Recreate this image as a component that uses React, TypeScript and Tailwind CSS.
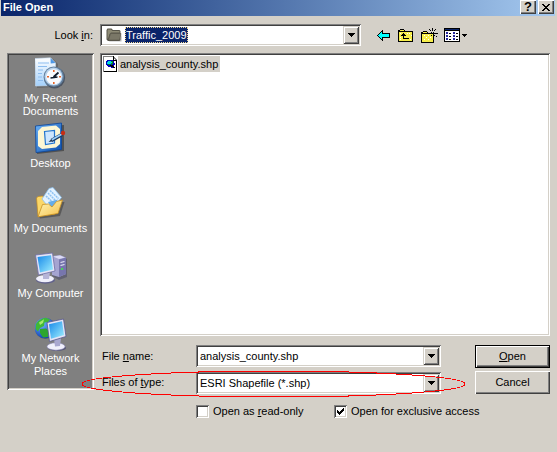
import React, { useState } from "react";
import clsx from "clsx";

const sunken =
  "shadow-[inset_1px_1px_0_#808080,inset_-1px_-1px_0_#fff,inset_2px_2px_0_#404040,inset_-2px_-2px_0_#d4d0c8]";
const raised =
  "bg-[#d4d0c8] shadow-[inset_1px_1px_0_#fff,inset_-1px_-1px_0_#404040,inset_-2px_-2px_0_#808080]";

function RecentIcon() {
  return (
    <svg viewBox="0 0 32 32" className="h-8 w-8" aria-hidden="true">
      <defs>
        <linearGradient id="page" x1="0" y1="0" x2="0" y2="1">
          <stop offset="0" stopColor="#fff" />
          <stop offset="1" stopColor="#a3d0fb" />
        </linearGradient>
      </defs>
      <path d="M1 2 L17 1 L22 6 V29 L1 30 Z" fill="#444" opacity=".4" transform="translate(1 1)" />
      <path d="M0 1.500 L15.500 0.800 L20.500 6 V28.500 L0.500 29 Z" fill="url(#page)" stroke="#c4dcf4" strokeWidth=".6" />
      <path d="M15.500 1 L15.700 6.500 L20.500 6 Z" fill="#4f98e6" />
      <path d="M3 6h11M3 9.500h9M3 13h5M3 16.500h4M3 20h4M3 23.500h5" stroke="#8dbdef" strokeWidth="1.2" />
      <circle cx="19.500" cy="20.800" r="10.600" fill="#3f4a5c" opacity=".8" />
      <circle cx="18.800" cy="19.800" r="10.200" fill="#64819f" />
      <circle cx="18.600" cy="19.600" r="9" fill="#b9d3ec" />
      <circle cx="18.800" cy="19.800" r="7.600" fill="#f9fbff" />
      <path d="M18.800 13v2M18.800 25v2M12 19.800h2M24 19.800h2" stroke="#e5642b" strokeWidth="1.600" />
      <path d="M23.500 15.500 L18.500 20 M15.500 21 L22.500 20" stroke="#101c2c" strokeWidth="1.700" fill="none" />
    </svg>
  );
}

function DesktopIcon() {
  return (
    <svg viewBox="0 0 32 32" className="h-8 w-8" aria-hidden="true">
      <defs>
        <linearGradient id="desk" x1="0" y1="0" x2="1" y2="1">
          <stop offset="0" stopColor="#6bb2f7" />
          <stop offset="1" stopColor="#0c4fae" />
        </linearGradient>
      </defs>
      <path d="M2 5 L29 3 V29 L2 32 Z" fill="#333" opacity=".6" />
      <path d="M0.500 4 L26.500 1 V27.500 L1 30.500 Z" fill="url(#desk)" stroke="#0b4599" strokeWidth=".8" />
      <path d="M7 5 L21 3.500 L25 7 V22 L21 25.500 L7 27 L3 24 V9 Z" fill="#fdf7d4" />
      <path d="M9.500 9.500 L19.500 8.500 V21 L10.500 22.500 Z" fill="#cde6fe" stroke="#2375cf" strokeWidth="1.2" />
      <path d="M16.500 18.500 L27 12.500" stroke="#1c3a63" strokeWidth="3.600" />
      <path d="M16.500 18 L27 12" stroke="#9bd0fa" strokeWidth="1.800" />
      <path d="M13.500 20 L16.500 17 L17.500 19.500 Z" fill="#263b56" />
      <circle cx="28" cy="11" r="2.200" fill="#c62d14" />
    </svg>
  );
}

function DocumentsIcon() {
  return (
    <svg viewBox="0 0 32 32" className="h-8 w-8" aria-hidden="true">
      <defs>
        <linearGradient id="fold" x1="0" y1="0" x2="1" y2="1">
          <stop offset="0" stopColor="#fff6b8" />
          <stop offset="1" stopColor="#f6c04a" />
        </linearGradient>
      </defs>
      <path d="M4 29 L5 31.500 L25 29 L29.500 15 L24 15 Z" fill="#333" opacity=".5" />
      <path d="M1.500 11 L3 9.500 L7.500 9 L9.500 11 L24 10 L20 27 L3 29.500 Z" fill="#fbd768" stroke="#c18a20" strokeWidth=".7" />
      <path d="M7 12 L14 1.500 L18 0.500 L26.500 10.500 L16 23 Z" fill="#e3f2ff" stroke="#8cc0ee" strokeWidth=".8" />
      <path d="M15 3.500 L23.500 11.500 M13 6 L21 14 M11 9 L18 15.500" stroke="#8dc2f3" strokeWidth="1.500" strokeDasharray="2 .7" />
      <path d="M13 15 L23 12.500 L16.500 21 Z" fill="#66ade9" />
      <path d="M3 29.800 L7.500 17.500 L13.500 17 L17 20 L21.500 14.500 L27.500 13 L23 26.500 Z" fill="url(#fold)" stroke="#c68f22" strokeWidth=".8" />
    </svg>
  );
}

function ComputerIcon() {
  return (
    <svg viewBox="0 0 32 32" className="h-8 w-8" aria-hidden="true">
      <defs>
        <linearGradient id="screen" x1="0" y1="0" x2="1" y2="1">
          <stop offset="0" stopColor="#1688e9" />
          <stop offset="1" stopColor="#a0f0ff" />
        </linearGradient>
      </defs>
      <path d="M17 6 L27 4 L32 7 V25 L24 28 L17 24 Z" fill="#4c4c67" opacity=".6" />
      <path d="M17 4 L25 3 L31 5.500 V22 L24 25 L17 23 Z" fill="#a5a4d1" />
      <path d="M24 7.500 L31 5.500 V22 L24 25 Z" fill="#7776ad" />
      <path d="M18 4.500 L25 3.500 L30 5.500 L24 7 Z" fill="#dcdcf4" />
      <path d="M25.500 10.500 L29.500 9.500 M25.500 13.500 L29.500 12.500" stroke="#e8e8fa" strokeWidth="1.200" />
      <rect x="26" y="16" width="2" height="2" fill="#4ad35a" />
      <ellipse cx="10.500" cy="28" rx="9.500" ry="3.700" fill="#62628c" />
      <ellipse cx="10" cy="26.800" rx="9" ry="3.500" fill="#f0f0fb" />
      <path d="M8 20 L15 20 L14 27 L8 27 Z" fill="#b6b5d8" />
      <path d="M0.500 3 L17.500 1 L20 19 L3.500 23 Z" fill="#e4e4f6" stroke="#6e6da4" strokeWidth=".8" />
      <path d="M2.500 5 L16 3.200 L18 17.500 L5 20.500 Z" fill="url(#screen)" />
    </svg>
  );
}

function NetworkIcon() {
  return (
    <svg viewBox="0 0 32 34" className="h-[34px] w-8" aria-hidden="true">
      <defs>
        <radialGradient id="globe" cx=".35" cy=".3" r=".75">
          <stop offset="0" stopColor="#6fb4ff" />
          <stop offset="1" stopColor="#0a3cb4" />
        </radialGradient>
      </defs>
      <circle cx="10.500" cy="11.500" r="10.500" fill="#333" opacity=".4" />
      <circle cx="10" cy="11" r="10.300" fill="url(#globe)" />
      <path d="M1 7 Q5 1 11 0.800 L15 2.500 L13 5 L9.500 5.500 L9 9 L5 11 L3 14.500 L0.500 12 Z" fill="#3fb837" />
      <path d="M5 12 L11 11.500 L14 14 L13 20 L8 20.500 L5 16 Z" fill="#2ca52e" />
      <path d="M4 5.500 L9 2.200 L8 6 L5 8 Z" fill="#a6ea6c" />
      <ellipse cx="22" cy="31" rx="9" ry="3" fill="#4a4a70" opacity=".8" />
      <ellipse cx="21" cy="29.500" rx="9" ry="3.700" fill="#f0f0fb" stroke="#8b8ab5" strokeWidth=".6" />
      <path d="M19 22 L26 21 L25 29 L20 29.500 Z" fill="#a9a8d0" />
      <path d="M12 5.500 L28.500 2 L31 19.500 L14.500 24.500 Z" fill="#e4e4f6" stroke="#58588b" strokeWidth=".8" />
      <path d="M14 7.200 L27 4.300 L29 18 L16 21.800 Z" fill="url(#screen)" />
    </svg>
  );
}

const places = [
  { label: "My Recent Documents", icon: RecentIcon },
  { label: "Desktop", icon: DesktopIcon },
  { label: "My Documents", icon: DocumentsIcon },
  { label: "My Computer", icon: ComputerIcon },
  { label: "My Network Places", icon: NetworkIcon },
];

function FolderIcon() {
  return (
    <svg viewBox="0 0 16 14" className="h-3.5 w-4 shrink-0" aria-hidden="true">
      <path d="M2.500 12.500 H14 L16 6 L15.500 13.500 H3.500 Z" fill="#999" opacity=".6" />
      <path d="M0.500 2 L1.500 0.500 H5.500 L7 2 H13.500 L14.500 3 V12 L13.500 13 H2 L0.500 11.500 Z" fill="#57554a" />
      <path d="M1.500 2.500 L2 1.500 H5 L6.500 3 H13.500 V4.500 H5 L3.500 6 L2 11 L1.500 10.500 Z" fill="#8d8a75" />
      <path d="M4.500 5.500 H15 L13.500 12 H2.500 Z" fill="#7a7767" stroke="#5a584c" strokeWidth=".6" />
    </svg>
  );
}

function ShapefileIcon() {
  return (
    <svg viewBox="0 0 14 16" className="h-4 w-3.5 shrink-0" shapeRendering="crispEdges" aria-hidden="true">
      <path d="M0.500 0.500 H10 L13.500 4 V15.500 H0.500 Z" fill="#fff" stroke="#808080" />
      <path d="M10 0v4h4M13.500 4v12M1 15.500h13" fill="none" stroke="#000" />
      <path d="M4 4h6v1h1v2h1v2h-1v2h-1v1h-2v-1h-3v-1h-1v-1h-1v-4h1z" fill="#0000c0" />
      <path d="M5 5h3v1h1v1h-1v1h-1v1h-2v-1h-1v-2h1z" fill="#00d8d8" />
      <path d="M8 5h2v3h-1v1h-1v-2h1v-1h-1zM5 8h2v1h-2z" fill="#008a20" />
      <path d="M7 9h3v1h1v1h1v1h-2v-1h-2v-1h-1z" fill="#000" />
    </svg>
  );
}

function Caret() {
  return (
    <svg viewBox="0 0 7 4" className="h-1 w-[7px]" shapeRendering="crispEdges" aria-hidden="true">
      <path d="M0 0h7v1h-1v1h-1v1h-1v1h-1v-1h-1v-1h-1v-1h-1z" />
    </svg>
  );
}

const arrowBox =
  "flex w-4 shrink-0 items-center justify-center bg-[#d4d0c8] shadow-[inset_1px_1px_0_#d4d0c8,inset_-1px_-1px_0_#404040,inset_2px_2px_0_#fff,inset_-2px_-2px_0_#808080]";

function ToolButton({ label, className, children }: { label: string; className?: string; children: React.ReactNode }) {
  return (
    <button type="button" aria-label={label} className={clsx("flex h-[22px] items-center justify-center", className)}>
      {children}
    </button>
  );
}

export default function App() {
  const [readOnly, setReadOnly] = useState(false);
  const [exclusive, setExclusive] = useState(true);
  const [fileName, setFileName] = useState("analysis_county.shp");

  return (
    <div className="min-h-screen bg-[#d4d0c8] font-['Liberation_Sans',Arial,sans-serif] text-[11px] leading-[13px] text-black">
      {/* Title bar */}
      <header className="mr-0.5 ml-px flex h-4 items-start justify-between bg-linear-to-r from-[#0a246a] to-[#a6caf0] pr-px pl-0.5">
        <h1 className="pt-px font-bold text-white">File Open</h1>
        <div className="flex gap-0.5">
          <button type="button" aria-label="Help" className={clsx("h-3.5 w-4 text-[13px] leading-3 font-bold", raised)}>
            ?
          </button>
          <button type="button" aria-label="Close" className={clsx("flex h-3.5 w-4 items-center justify-center", raised)}>
            <svg viewBox="0 0 8 7" className="h-[7px] w-2" shapeRendering="crispEdges" aria-hidden="true">
              <path d="M0 0h2v1h1v1h2v-1h1v-1h2v1h-1v1h-1v1h-1v1h1v1h1v1h1v1h-2v-1h-1v-1h-2v1h-1v1h-2v-1h1v-1h1v-1h1v-1h-1v-1h-1v-1h-1z" />
            </svg>
          </button>
        </div>
      </header>

      {/* Look in + toolbar */}
      <div className="mt-2 flex items-center px-[7px]">
        <label htmlFor="look-in" className="w-[93px] shrink-0 pr-[7px] text-right">
          Look <u>i</u>n:
        </label>
        <div className={clsx("flex h-[22px] w-[261px] items-stretch bg-white p-0.5", sunken)}>
          <div className="flex flex-1 items-center gap-[3px] pl-1">
            <FolderIcon />
            <select
              id="look-in"
              className="h-4 appearance-none bg-[#0a246a] pr-px pl-px text-white outline-1 -outline-offset-1 outline-dotted outline-[#f5db95]"
            >
              <option>Traffic_2009</option>
            </select>
          </div>
          <span className={arrowBox}>
            <Caret />
          </span>
        </div>
        <div className="ml-3 flex items-center">
          <ToolButton label="Go to last folder visited" className="w-5">
            <svg viewBox="0 0 13 11" className="h-[11px] w-[13px]" shapeRendering="crispEdges" aria-hidden="true">
              <path d="M0 5h1v-1h1v-1h1v-1h1v-1h1v-1h1v3h7v5h-7v3h-1v-1h-1v-1h-1v-1h-1v-1h-1v-1h-1z" />
              <path d="M1 5h1v-1h1v-1h1v-1h1v2h7v3h-7v2h-1v-1h-1v-1h-1v-1h-1z" fill="#00ffff" />
            </svg>
          </ToolButton>
          <ToolButton label="Up one level" className="w-6">
            <svg viewBox="0 0 15 13" className="h-[13px] w-[15px]" shapeRendering="crispEdges" aria-hidden="true">
              <path d="M2 0h4v1h1v1h8v11h-15v-12h2z" />
              <path d="M2 1h4v1h-4zM1 3h13v9h-13z" fill="#f6ee4a" />
              <path d="M2 4h1v1h-1zM11 4h1v1h-1zM13 6h1v1h-1zM2 8h1v1h-1zM12 10h1v1h-1zM2 10h1v1h-1zM9 4h1v1h-1z" fill="#fff" />
              <path d="M5 4h1v1h1v1h1v1h-2v2h5v1h-6v-3h-2v-1h1v-1h1z" />
            </svg>
          </ToolButton>
          <ToolButton label="Create new folder" className="w-6">
            <svg viewBox="0 0 17 15" className="h-[15px] w-[17px]" shapeRendering="crispEdges" aria-hidden="true">
              <path d="M2 3h4v1h1v1h6v10h-13v-11h2z" />
              <path d="M2 4h4v1h-4zM1 6h11v8h-11z" fill="#f6ee4a" />
              <path d="M3 7h1v1h-1zM7 7h1v1h-1zM5 9h1v1h-1zM9 9h1v1h-1zM3 11h1v1h-1zM7 11h1v1h-1z" fill="#fff" />
              <path d="M11 0h1v3h-1zM8 1h1v1h-1zM9 2h1v1h-1zM14 1h1v1h-1zM13 2h1v1h-1zM7 5h3v1h-3zM13 5h4v1h-4zM10 4h1v1h-1zM12 4h1v1h-1zM10 7h1v1h-1zM13 7h1v1h-1zM15 8h1v1h-1zM12 7h1v3h-1z" />
            </svg>
          </ToolButton>
          <ToolButton label="View menu" className="w-7 gap-0.5">
            <svg viewBox="0 0 16 14" className="h-3.5 w-4 shrink-0" shapeRendering="crispEdges" aria-hidden="true">
              <path d="M0 0h16v14h-16z" />
              <path d="M1 1h14v1h-14z" fill="#0a246a" />
              <path d="M1 3h14v10h-14z" fill="#fff" />
              <path d="M2 4h2v2h-2zM2 7h2v2h-2zM2 10h2v2h-2zM9 4h2v2h-2zM9 7h2v2h-2zM9 10h2v2h-2z" fill="#26269b" />
              <path d="M5 5h2v1h-2zM5 8h2v1h-2zM5 11h2v1h-2zM12 5h2v1h-2zM12 8h2v1h-2zM12 11h2v1h-2z" />
            </svg>
            <svg viewBox="0 0 5 3" className="h-[3px] w-[5px] shrink-0" shapeRendering="crispEdges" aria-hidden="true">
              <path d="M0 0h5v1h-1v1h-1v1h-1v-1h-1v-1h-1z" />
            </svg>
          </ToolButton>
        </div>
      </div>

      <div className="mt-[7px] flex items-start gap-1.5 px-[7px]">
        {/* Places bar */}
        <nav className={clsx("min-h-[337px] w-[87px] shrink-0 bg-[#808080] px-0.5 pt-1", sunken)}>
          {places.map(({ label, icon: Icon }) => (
            <button
              key={label}
              type="button"
              className="flex h-[65px] w-full flex-col items-center text-white"
            >
              <span className="flex h-[35px] shrink-0 items-start">
                <Icon />
              </span>
              <span className={label.length > 12 ? "w-16" : "whitespace-nowrap"}>{label}</span>
            </button>
          ))}
        </nav>

        <main className="min-w-0 flex-1">
          <ul className={clsx("h-[283px] bg-white p-0.5", sunken)}>
            <li className="flex h-[18px] items-center gap-px pl-px">
              <ShapefileIcon />
              <span className="h-4 bg-[#d4d0c8] px-0.5 leading-4">analysis_county.shp</span>
            </li>
          </ul>

          <div className="relative mt-[9px] grid grid-cols-[96px_1fr_109px] gap-y-[3px]">
            <label htmlFor="file-name" className="self-center pl-0.5">
              File <u>n</u>ame:
            </label>
            <div className={clsx("flex h-[22px] bg-white p-0.5", sunken)}>
              <input
                id="file-name"
                type="text"
                value={fileName}
                onChange={(e) => setFileName(e.target.value)}
                className="min-w-0 flex-1 pl-0.5 outline-none"
              />
              <button type="button" aria-label="Show recent names" className={arrowBox}>
                <Caret />
              </button>
            </div>
            <button
              type="button"
              className="ml-[34px] h-[23px] border border-black bg-[#d4d0c8] shadow-[inset_1px_1px_0_#fff,inset_-1px_-1px_0_#404040,inset_-2px_-2px_0_#808080]"
            >
              <u>O</u>pen
            </button>

            <label htmlFor="file-type" className="self-center pl-0.5">
              Files of <u>t</u>ype:
            </label>
            <div className={clsx("flex h-[22px] self-end bg-white p-0.5", sunken)}>
              <select id="file-type" className="min-w-0 flex-1 appearance-none pl-0.5 outline-none">
                <option>ESRI Shapefile (*.shp)</option>
              </select>
              <span className={arrowBox}>
                <Caret />
              </span>
            </div>
            <button type="button" className={clsx("ml-[34px] h-[23px]", raised)}>
              Cancel
            </button>

            {/* Red ring around the type row */}
            <div className="pointer-events-none absolute right-[84px] -bottom-1 -left-[19px] h-7">
              <svg className="h-full w-full" shapeRendering="crispEdges" aria-hidden="true">
                <ellipse cx="50%" cy="50%" rx="49.8%" ry="13" fill="none" stroke="#ff0000" />
              </svg>
            </div>
          </div>

          <div className="mt-[11px] flex pl-24">
            {[
              { id: "read-only", checked: readOnly, set: setReadOnly, text: <>Open as <u>r</u>ead-only</> },
              { id: "exclusive", checked: exclusive, set: setExclusive, text: <>Open for exclusive access</> },
            ].map((item) => (
              <label key={item.id} htmlFor={item.id} className="flex w-[138px] items-center gap-1 whitespace-nowrap">
                <span className="relative h-[13px] w-[13px] shrink-0">
                  <input
                    id={item.id}
                    type="checkbox"
                    checked={item.checked}
                    onChange={(e) => item.set(e.target.checked)}
                    className={clsx("block h-[13px] w-[13px] appearance-none bg-white", sunken)}
                  />
                  {item.checked && (
                    <svg
                      viewBox="0 0 13 13"
                      className="pointer-events-none absolute inset-0"
                      shapeRendering="crispEdges"
                      aria-hidden="true"
                    >
                      <path d="M3 5h1v1h1v1h1v-1h1v-1h1v-1h1v-1h1v3h-1v1h-1v1h-1v1h-1v1h-1v-1h-1v-1h-1z" />
                    </svg>
                  )}
                </span>
                <span>{item.text}</span>
              </label>
            ))}
          </div>
        </main>
      </div>
    </div>
  );
}
